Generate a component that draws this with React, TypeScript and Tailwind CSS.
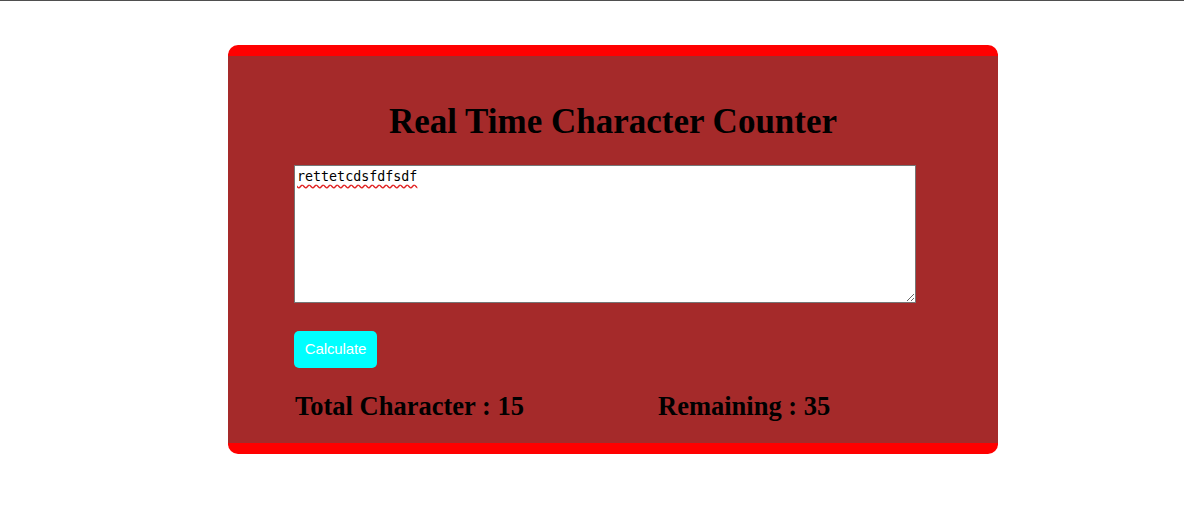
import { useState } from "react";

export default function App() {
  const [text, setText] = useState("rettetcdsfdfsdf");
  const max = 50;

  return (
    <div className="min-h-[531px] border-t border-[#4f4f4f] bg-white">
      <div className="ml-[228px] mt-[44px] w-[770px] rounded-[10px] border-y-[11px] border-[#ff0000] bg-[#a52a2a] px-[66px] pb-[21px] pt-[46px] font-['Liberation_Serif',serif] text-black">
        <h1 className="text-center text-[35px] font-bold leading-[40px]">Real Time Character Counter</h1>
        <textarea
          value={text}
          onChange={(e) => setText(e.target.value)}
          spellCheck
          className="mt-[23px] block h-[138px] w-[622px] border border-[#767676] bg-white px-[2px] pb-[2px] pt-[3px] font-['DejaVu_Sans_Mono',monospace] text-[13.33px] leading-[16px] text-black underline decoration-[#e02020] decoration-wavy underline-offset-[3px] outline-none"
        />
        <button className="mt-[28px] block h-[37px] w-[83px] rounded-[5px] bg-[#00ffff] text-center font-['Liberation_Sans',Arial,sans-serif] text-[15px] tracking-[-0.1px] text-white">
          Calculate
        </button>
        <div className="mt-[22px] flex text-[26.5px] font-bold leading-[32px]">
          <span className="w-[364px] pl-[1px]">Total Character : {text.length}</span>
          <span>Remaining : {max - text.length}</span>
        </div>
      </div>
    </div>
  );
}
